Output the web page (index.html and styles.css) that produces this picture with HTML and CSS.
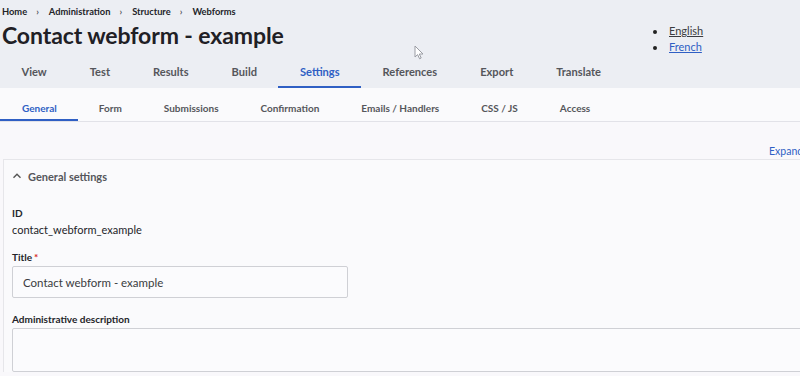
FILE: index.html
```html
<!DOCTYPE html>
<html lang="en">
<head>
  <meta charset="UTF-8" />
  <title>Contact webform - example | Settings</title>
  <meta name="viewport" content="width=device-width, initial-scale=1.0" />
  <link rel="stylesheet" href="styles.css">
</head>
<body>

<!-- Page header -->
<div class="header">
  <div class="header-top">
    <div class="header-title">
      <ol class="breadcrumb">
        <li><a href="#">Home</a></li>
        <li><a href="#">Administration</a></li>
        <li><a href="#">Structure</a></li>
        <li><a href="#">Webforms</a></li>
      </ol>
      <h1>Contact webform - example</h1>
    </div>
    <ul class="langs">
      <li><a href="#" class="current">English</a></li>
      <li><a href="#">French</a></li>
    </ul>
  </div>

  <nav class="tabs-primary">
    <a href="#">View</a>
    <a href="#">Test</a>
    <a href="#">Results</a>
    <a href="#">Build</a>
    <a href="#" class="active">Settings</a>
    <a href="#">References</a>
    <a href="#">Export</a>
    <a href="#">Translate</a>
  </nav>
</div>

<!-- Secondary tabs -->
<nav class="tabs-secondary">
  <a href="#" class="active">General</a>
  <a href="#">Form</a>
  <a href="#">Submissions</a>
  <a href="#">Confirmation</a>
  <a href="#">Emails / Handlers</a>
  <a href="#">CSS / JS</a>
  <a href="#">Access</a>
</nav>

<!-- Form -->
<div class="content">
  <div class="expand-row"><a href="#">Expand all</a></div>

  <div class="box">
    <div class="box-summary">
      <svg width="10" height="10" viewBox="0 0 10 10"><path d="M1.5 6.8 L5 3.3 L8.5 6.8" fill="none" stroke="#555" stroke-width="1.4"/></svg>
      General settings
    </div>
    <div class="box-body">
      <div class="field">
        <div class="label">ID</div>
        <div class="value">contact_webform_example</div>
      </div>
      <div class="field">
        <div class="label">Title<span class="req">*</span></div>
        <input type="text" class="text-input" value="Contact webform - example">
      </div>
      <div class="field">
        <div class="label">Administrative description</div>
        <textarea class="textarea"></textarea>
      </div>
    </div>
  </div>
</div>

<!-- mouse pointer from the capture -->
<svg class="pointer" width="11" height="15" viewBox="0 0 11 15">
  <path d="M1 1 L1 12 L3.6 9.6 L5.6 13.8 L7.2 13 L5.3 9 L9 9 Z" fill="#fff" stroke="#9a9ca3" stroke-width="1"/>
</svg>

</body>
</html>
```

FILE: styles.css
```css
* {
  margin: 0; padding: 0; box-sizing: border-box;
  font-family: Lato, 'Noto Sans', sans-serif;
}

body {
  background: #f9f8fb;
  color: #232429;
  width: 800px;
  height: 376px;
  overflow: hidden;
  position: relative;
}

a { text-decoration: none; }

.header {
  background: #eceef3;
}

.header-top {
  display: flex;
  justify-content: space-between;
  height: 57px;
}

.header-title { padding-left: 2px; }

.breadcrumb {
  display: flex;
  list-style: none;
  padding-top: 5px;
  height: 20px;
}

.breadcrumb li {
  font-size: 9.3px;
  font-weight: 700;
  line-height: 14px;
}

.breadcrumb li + li::before {
  content: "\203A";
  color: #55565b;
  margin: 0 10px 0 9px;
}

.breadcrumb a { color: #232429; }

h1 {
  font-size: 23px;
  font-weight: 700;
  line-height: 30px;
  letter-spacing: -0.1px;
  color: #1f2025;
}

.langs {
  width: 147px;
  padding-top: 23px;
  list-style: disc;
  list-style-position: inside;
  font-size: 11px;
  line-height: 16px;
}

.langs li { color: #222; }

.langs a {
  color: #2f5fc4;
  text-decoration: underline;
}

.langs a.current { color: #3a3b40; }

.tabs-primary {
  display: flex;
  height: 31px;
}

.tabs-primary a {
  padding: 0 21.5px;
  font-size: 11.1px;
  font-weight: 700;
  line-height: 29px;
  color: #55565b;
  border-bottom: 2px solid transparent;
}

.tabs-primary a.active {
  color: #2f5fc4;
  border-bottom-color: #2f5fc4;
}

.tabs-secondary {
  display: flex;
  height: 34px;
  padding-top: 10px;
  border-bottom: 1px solid #e2e2e8;
  background: #fafafc;
}

.tabs-secondary a {
  padding: 0 21px;
  font-size: 10px;
  font-weight: 700;
  line-height: 21px;
  color: #55565b;
  border-bottom: 2px solid transparent;
}

.tabs-secondary a:first-child { padding-left: 22px; }

.tabs-secondary a.active {
  color: #2f5fc4;
  border-bottom-color: #2f5fc4;
}

.content {
  padding-top: 17px;
}

.expand-row {
  text-align: right;
  height: 20px;
  margin-right: -16px;
}

.expand-row a {
  font-size: 10.5px;
  color: #2f5fc4;
  line-height: 16px;
}

.box {
  margin-left: 3px;
  border-top: 1px solid #e6e6ea;
  border-left: 1px solid #e6e6ea;
  background: #fafafc;
}

.box-summary {
  display: flex;
  align-items: center;
  gap: 6px;
  height: 32px;
  padding-left: 8px;
  font-size: 11px;
  font-weight: 700;
  color: #55565b;
}

.box-body {
  padding: 14px 0 0 8px;
}

.field { margin-bottom: 12px; }

.label {
  font-size: 10px;
  font-weight: 700;
  line-height: 14px;
  color: #232429;
  margin-bottom: 2px;
}

.req {
  color: #d72222;
  margin-left: 2px;
}

.value {
  font-size: 11px;
  line-height: 16px;
  color: #232429;
}

.text-input {
  display: block;
  width: 336px;
  height: 32px;
  margin-bottom: 14px;
  padding: 0 10px;
  border: 1px solid #cfd0d5;
  border-radius: 2px;
  background: #fbfbfd;
  font-size: 11.5px;
  color: #3a3b40;
}

.textarea {
  display: block;
  width: 820px;
  height: 44px;
  border: 1px solid #cfd0d5;
  border-radius: 2px;
  background: #fbfbfd;
  resize: none;
}

.pointer {
  position: absolute;
  left: 414px;
  top: 45px;
}
```
